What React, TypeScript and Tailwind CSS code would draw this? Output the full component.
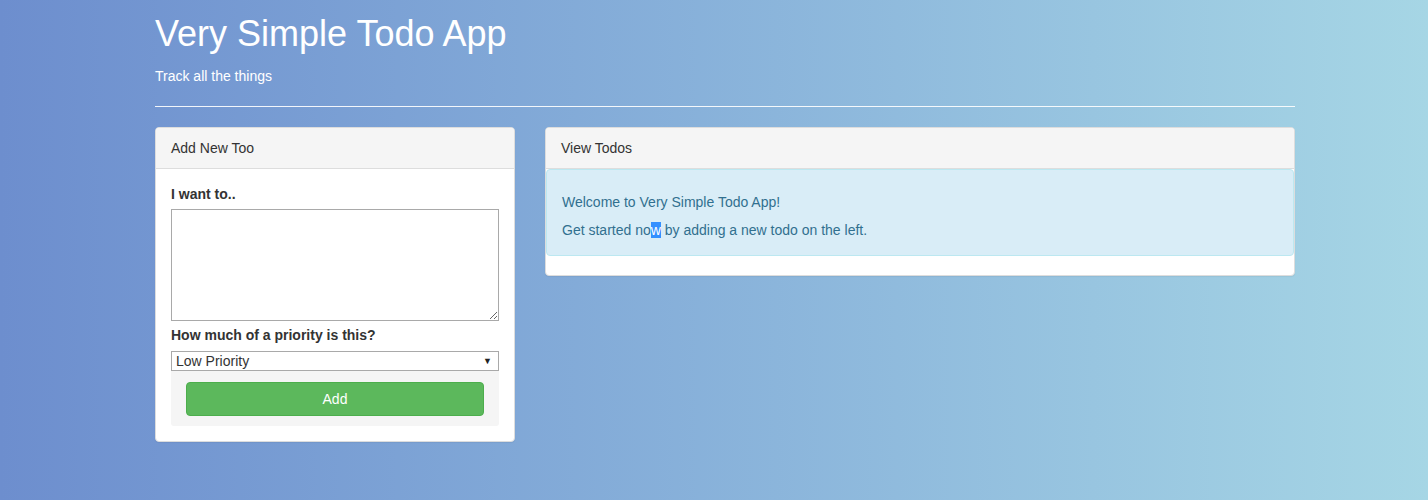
import React from 'react';

const App: React.FC = () => {
  return (
    <div
      className="min-h-[500px] w-full bg-gradient-to-r from-[#6d8ece] to-[#a6d6e5] text-[14px] leading-[20px] text-[#333]"
      style={{ fontFamily: '"Liberation Sans", Arial, Helvetica, sans-serif' }}
    >
      <div className="ml-[155px] w-[1140px] pt-[14px]">
        <h1 className="text-[36px] leading-[1.1] font-normal text-white">Very Simple Todo App</h1>
        <p className="mt-[12px] text-white">Track all the things</p>
        <hr className="mt-[20px] border-0 border-t border-white/90" />

        <div className="mt-[20px] flex items-start gap-[30px]">
          <div className="w-[360px] bg-white border border-[#ddd] rounded-[4px] shadow-[0_1px_1px_rgba(0,0,0,0.05)]">
            <div className="px-[15px] py-[10px] bg-[#f5f5f5] border-b border-[#ddd] rounded-t-[3px]">Add New Too</div>
            <div className="p-[15px]">
              <label className="block font-bold mb-[5px]">I want to..</label>
              <textarea className="block w-full h-[112px] border border-[#a9a9a9] bg-white" />
              <label className="block font-bold mt-[4px] mb-[6px]">How much of a priority is this?</label>
              <div className="flex items-center justify-between h-[20px] border border-[#a9a9a9] bg-white pl-[4px] pr-[6px] leading-[18px]">
                <span>Low Priority</span>
                <span className="text-[9px] text-[#222]">▼</span>
              </div>
              <div className="bg-[#f5f5f5] px-[15px] pt-[11px] pb-[10px] rounded-b-[3px]">
                <button className="w-full h-[34px] rounded-[4px] bg-[#5cb85c] border border-[#4cae4c] text-white">Add</button>
              </div>
            </div>
          </div>

          <div className="w-[750px] bg-white border border-[#ddd] rounded-[4px] shadow-[0_1px_1px_rgba(0,0,0,0.05)]">
            <div className="px-[15px] py-[10px] bg-[#f5f5f5] border-b border-[#ddd] rounded-t-[3px]">View Todos</div>
            <div className="pb-[19px]">
              <div className="bg-[#d9edf7] border border-[#bce8f1] rounded-[4px] text-[#31708f] px-[15px] pt-[22px] pb-[15px]">
                <p className="mb-[8px]">Welcome to Very Simple Todo App!</p>
                <p>
                  Get started no<span className="bg-[#3390ff] text-white">w</span> by adding a new todo on the left.
                </p>
              </div>
            </div>
          </div>
        </div>
      </div>
    </div>
  );
};

export default App;
